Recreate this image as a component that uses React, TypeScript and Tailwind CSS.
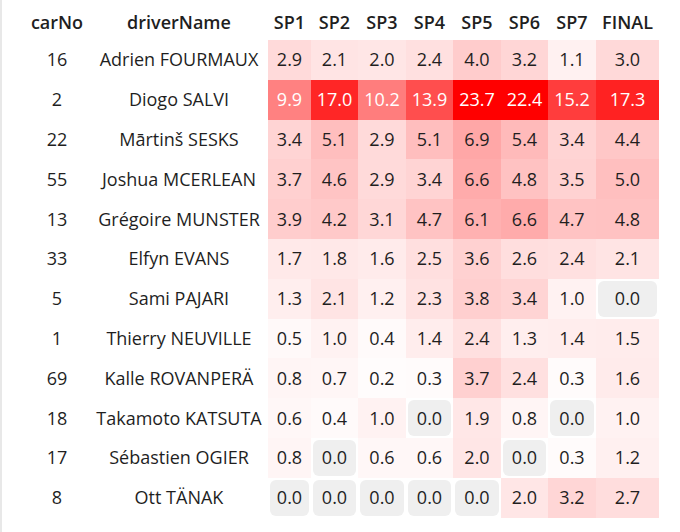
import React from "react";

type Row = { carNo: number; driverName: string; times: number[] };

const stages = ["SP1", "SP2", "SP3", "SP4", "SP5", "SP6", "SP7", "FINAL"];

const rows: Row[] = [
  { carNo: 16, driverName: "Adrien FOURMAUX", times: [2.9, 2.1, 2.0, 2.4, 4.0, 3.2, 1.1, 3.0] },
  { carNo: 2, driverName: "Diogo SALVI", times: [9.9, 17.0, 10.2, 13.9, 23.7, 22.4, 15.2, 17.3] },
  { carNo: 22, driverName: "Mārtinš SESKS", times: [3.4, 5.1, 2.9, 5.1, 6.9, 5.4, 3.4, 4.4] },
  { carNo: 55, driverName: "Joshua MCERLEAN", times: [3.7, 4.6, 2.9, 3.4, 6.6, 4.8, 3.5, 5.0] },
  { carNo: 13, driverName: "Grégoire MUNSTER", times: [3.9, 4.2, 3.1, 4.7, 6.1, 6.6, 4.7, 4.8] },
  { carNo: 33, driverName: "Elfyn EVANS", times: [1.7, 1.8, 1.6, 2.5, 3.6, 2.6, 2.4, 2.1] },
  { carNo: 5, driverName: "Sami PAJARI", times: [1.3, 2.1, 1.2, 2.3, 3.8, 3.4, 1.0, 0.0] },
  { carNo: 1, driverName: "Thierry NEUVILLE", times: [0.5, 1.0, 0.4, 1.4, 2.4, 1.3, 1.4, 1.5] },
  { carNo: 69, driverName: "Kalle ROVANPERÄ", times: [0.8, 0.7, 0.2, 0.3, 3.7, 2.4, 0.3, 1.6] },
  { carNo: 18, driverName: "Takamoto KATSUTA", times: [0.6, 0.4, 1.0, 0.0, 1.9, 0.8, 0.0, 1.0] },
  { carNo: 17, driverName: "Sébastien OGIER", times: [0.8, 0.0, 0.6, 0.6, 2.0, 0.0, 0.3, 1.2] },
  { carNo: 8, driverName: "Ott TÄNAK", times: [0.0, 0.0, 0.0, 0.0, 0.0, 2.0, 3.2, 2.7] },
];

// white -> red, clamped at 20s
const heat = (v: number) => {
  const g = Math.round(255 * (1 - Math.min(v / 20, 1)));
  return `rgb(255, ${g}, ${g})`;
};

const colWidths = [66, 178, 43, 47, 48, 47, 48, 47, 48, 63];

const TimeCell: React.FC<{ value: number }> = ({ value }) => {
  if (value === 0) {
    return (
      <td className="p-[2px]">
        <div className="h-[35.8px] rounded-[6px] bg-[#efefef] flex items-center justify-center">
          0.0
        </div>
      </td>
    );
  }
  return (
    <td
      className={value > 8 ? "text-white" : ""}
      style={{ backgroundColor: heat(value) }}
    >
      {value.toFixed(1)}
    </td>
  );
};

export default function App() {
  return (
    <div
      className="h-[532px] w-[680px] bg-white border-l-2 border-[#e8e8e8] text-[#1f1f1f] text-[18px]"
      style={{ fontFamily: '"Open Sans", "Noto Sans", sans-serif' }}
    >
      <table className="ml-[22px] table-fixed border-collapse text-center">
        <colgroup>
          {colWidths.map((w, i) => (
            <col key={i} style={{ width: w }} />
          ))}
        </colgroup>
        <thead>
          <tr className="h-[40px]">
            <th className="pt-1 font-semibold">carNo</th>
            <th className="pt-1 font-semibold">driverName</th>
            {stages.map((s) => (
              <th key={s} className="pt-1 font-semibold">
                {s}
              </th>
            ))}
          </tr>
        </thead>
        <tbody>
          {rows.map((r) => (
            <tr key={r.carNo} className="h-[39.8px]">
              <td>{r.carNo}</td>
              <td className="whitespace-nowrap">{r.driverName}</td>
              {r.times.map((t, i) => (
                <TimeCell key={i} value={t} />
              ))}
            </tr>
          ))}
        </tbody>
      </table>
    </div>
  );
}
